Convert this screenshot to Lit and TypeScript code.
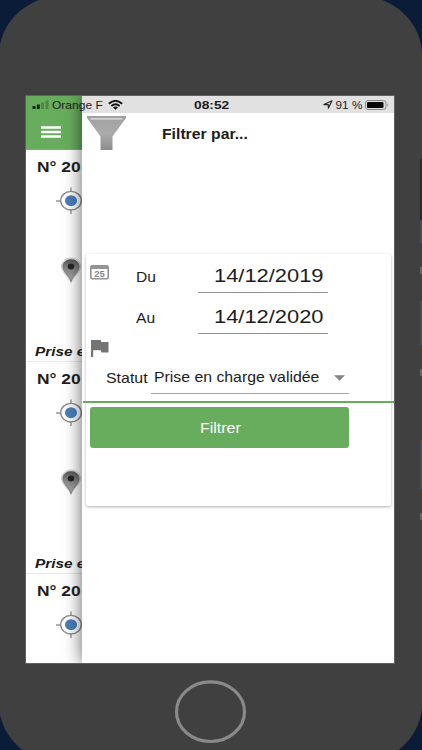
import { LitElement, html, css, svg } from "lit";
import { customElement, property, state, query } from "lit/decorators.js";

/** One line of text stretched horizontally to an exact width. */
@customElement("fit-text")
class FitText extends LitElement {
  @property({ type: Number }) width = 0;
  @property() text = "";
  @state() private ratio = 1;
  @query("span") private line!: HTMLSpanElement;

  static styles = css`
    :host { display: block; flex: none; line-height: 20px; height: 20px; }
    .line { display: inline-block; white-space: nowrap; transform-origin: 0 50%; }
  `;

  firstUpdated() {
    const natural = this.line.offsetWidth;
    if (natural) this.ratio = this.width / natural;
  }

  render() {
    return html`<span class="line" style="transform:scaleX(${this.ratio})">${this.text}</span>`;
  }
}

@customElement("trip-card")
class TripCard extends LitElement {
  static styles = css`
    :host { display: block; height: 212px; box-sizing: border-box; border-bottom: 1px solid #e9e9e9; overflow: hidden; }
    .number { font-size: 15px; font-weight: bold; margin: 7px 0 0 10.5px; }
    .icon { display: block; margin-left: 29px; }
    .target { margin-top: 9px; }
    .pin { margin-top: 40px; }
    .status { font-size: 13.5px; font-weight: bold; font-style: italic; margin: 58px 0 0 8.5px; }
  `;

  render() {
    return html`
      <fit-text class="number" width="44" text="N° 20"></fit-text>
      <svg class="icon target" width="32" height="30" viewBox="0 0 32 30" fill="none">
        <path d="M16 1.5v5M16 23v5M1 15h5M26 15h5" stroke="#969696" stroke-width="1.4" />
        <ellipse cx="16" cy="14.7" rx="10.3" ry="9.3" fill="#fff" stroke="#8e8e8e" stroke-width="1.4" />
        <ellipse cx="16" cy="14.7" rx="6" ry="5.5" fill="#4a7fba" />
      </svg>
      <svg class="icon pin" width="32" height="28" viewBox="0 0 32 28">
        <defs>
          <linearGradient id="g" x1="0" y1="0" x2="0" y2="1">
            <stop offset="0" stop-color="#555" /><stop offset=".45" stop-color="#8a8a8a" /><stop offset="1" stop-color="#a8a8a8" />
          </linearGradient>
        </defs>
        <path d="M16 26.500C14 21 6.500 16.500 6.500 10.300C6.500 5.500 11 2 16 2S25.500 5.500 25.500 10.300C25.500 16.500 18 21 16 26.500z" fill="#fff" stroke="#b8b8b8" stroke-width=".7" />
        <path d="M16 25.500C14.500 20.500 7.700 16 7.700 10.500C7.700 6.300 11.500 3.300 16 3.300S24.300 6.300 24.300 10.500C24.300 16 17.500 20.500 16 25.500z" fill="url(#g)" stroke="#666" stroke-width=".6" />
        <ellipse cx="16" cy="10.500" rx="3.300" ry="3" fill="#262626" />
      </svg>
      <fit-text class="status" width="50" text="Prise e"></fit-text>
    `;
  }
}

const funnel = svg`
  <defs><linearGradient id="f" x1="0" y1="0" x2="0" y2="1">
    <stop offset="0" stop-color="#a0a0a0"/><stop offset=".5" stop-color="#ababab"/><stop offset="1" stop-color="#8e8e8e"/>
  </linearGradient></defs>
  <path d="M0 0h39v2L25.500 20.500V34h-12V20.500L0 2z" fill="url(#f)"/>
  <path d="M3.500 2.800h32" stroke="#e4e4e4" stroke-width="1.300"/>`;

@customElement("app-root")
class AppRoot extends LitElement {
  static styles = css`
    :host { display: block; position: relative; width: 422px; height: 750px; overflow: hidden; background: #0a1c38; color: #1c1c1c;
      font-family: "Liberation Sans", Arial, sans-serif; }
    .phone { position: absolute; left: -1px; top: -5px; width: 423px; height: 769px; box-sizing: border-box; padding: 101px 0 0 27px;
      border-radius: 66px / 60px; background: #404040; }
    .screen { position: relative; display: flex; width: 368px; height: 567px; overflow: hidden; background: #fff; box-shadow: 0 0 0 1px #606060; }
    .list { width: 56px; overflow: hidden; flex: none; }
    .bar { height: 54px; background: #68ad5e; box-sizing: border-box; padding: 29.500px 0 0 15px; border-bottom: 1px solid #79b570; }
    .menu { display: block; }
    .drawer { flex: 1; background: #fff; box-shadow: 0 0 17px rgba(0, 0, 0, .62); }
    .strip { height: 17px; background: #e1e1e1; }
    .head { display: flex; height: 141px; align-items: flex-start; }
    .funnel { margin: 3px 0 0 5px; }
    .title { font-size: 14.200px; font-weight: bold; margin: 11px 0 0 35.500px; }
    .card { width: 305px; height: 252px; margin-left: 4px; border-radius: 2px; background: #fff; box-shadow: 0 1px 3px rgba(0, 0, 0, .32); }
    .row { display: flex; align-items: flex-end; }
    .first { height: 39px; }
    .second { height: 41px; }
    .ico { flex: none; align-self: flex-start; margin-left: 4px; }
    .cal { margin-top: 11px; }
    .gap { width: 19px; flex: none; margin-left: 4px; }
    .label { font-size: 14px; width: 62px; margin: 0 0 6px 27px; }
    .label.stat { width: 45px; margin: 0 0 6px 20px; font-size: 14.200px; }
    .field { box-sizing: border-box; width: 130px; height: 33px; padding: 6px 0 0 15.500px; border-bottom: 1px solid #929292; font-size: 18.800px; }
    .flagline { height: 27px; }
    .flag { display: block; margin-left: 5px; padding-top: 6px; }
    .select { display: flex; box-sizing: border-box; width: 198px; height: 33px; padding: 6px 4px 0 2.500px; border-bottom: 1px solid #a6a6a6; font-size: 14.200px; justify-content: space-between; }
    .caret { margin-top: 8px; }
    .rule { width: 311px; height: 2px; margin: 7px 0 0 -3px; background: #67ac5c; }
    .btn { display: flex; justify-content: center; align-items: center; width: 259px; height: 41px; margin: 4px 0 0 4px; padding: 0 3px 0 0; border: 0;
      border-radius: 3px; background: #68ad5d; color: #fff; font: 14px "Liberation Sans", Arial, sans-serif; }
    .caption { width: 41px; }
    .status { position: absolute; inset: 0 0 auto 0; height: 17px; display: flex; align-items: center; font-size: 11.800px; }
    .signal { margin-left: 5.500px; }
    .carrier { margin-left: 3.500px; width: 51px; }
    .wifi { margin-left: 5px; }
    .time { margin-left: 70.500px; width: 35px; font-weight: bold; }
    .loc { margin-left: 94px; }
    .pct { margin-left: 3px; width: 27px; }
    .batt { margin-left: 2px; }
    .home { position: absolute; left: 174px; top: 679px; }
    .edge { position: absolute; left: 420px; top: 159px; width: 2px; display: flex; flex-direction: column; opacity: .75; }
    .dark { height: 61px; background: #242424; }
    .blue { height: 23px; background: #40535f; }
    .mid { height: 44px; margin-top: 27px; }
    .low { height: 49px; margin-top: 64px; }
    .tick { height: 7px; margin-top: 24px; background: #747474; }
  `;

  render() {
    return html`
      <div class="phone">
        <div class="screen">
          <div class="list">
            <div class="bar">
              <svg class="menu" width="20" height="12" viewBox="0 0 20 12"><path d="M0 1.500h20M0 6h20M0 10.500h20" stroke="#fff" stroke-width="2.600" /></svg>
            </div>
            <trip-card></trip-card><trip-card></trip-card><trip-card></trip-card>
          </div>
          <div class="drawer">
            <div class="strip"></div>
            <div class="head">
              <svg class="funnel" width="39" height="34" viewBox="0 0 39 34">${funnel}</svg>
              <fit-text class="title" width="85.5" text="Filtrer par..."></fit-text>
            </div>
            <div class="card">
              <div class="row first">
                <svg class="ico cal" width="19" height="15" viewBox="0 0 19 15">
                  <rect x=".8" y=".8" width="17.400" height="13" rx="1.500" fill="#fff" stroke="#929292" stroke-width="1.600" />
                  <path d="M1 1h17v3H1z" fill="#959595" />
                  <text x="4.300" y="11.800" font-family="Liberation Sans" font-size="8.200" font-weight="bold" textLength="10.500" lengthAdjust="spacingAndGlyphs" fill="#858585">25</text>
                </svg>
                <fit-text class="label" width="20" text="Du"></fit-text>
                <div class="field"><fit-text width="109.5" text="14/12/2019"></fit-text></div>
              </div>
              <div class="row second">
                <div class="gap"></div>
                <fit-text class="label" width="19" text="Au"></fit-text>
                <div class="field"><fit-text width="109.5" text="14/12/2020"></fit-text></div>
              </div>
              <div class="flagline">
                <svg class="flag" width="18" height="17" viewBox="0 0 18 17"><path d="M0 0h9.800l.5 2H17.500v10.500h-7l-.6-2.200H2.200V17H0z" fill="#747474" /></svg>
              </div>
              <div class="row">
                <fit-text class="label stat" width="41.5" text="Statut"></fit-text>
                <div class="select">
                  <fit-text width="165" text="Prise en charge validée"></fit-text>
                  <svg class="caret" width="11" height="6" viewBox="0 0 11 6"><path d="M0 .3h11L5.500 5.800z" fill="#858585" /></svg>
                </div>
              </div>
              <div class="rule"></div>
              <button class="btn"><fit-text class="caption" width="41" text="Filtrer"></fit-text></button>
            </div>
          </div>
          <div class="status">
            <svg class="signal" width="17" height="9" viewBox="0 0 17 9"><path d="M.5 6h3v3h-3zM4.800 4.500h3V9h-3z" fill="#182816" /><path d="M9 2.500h3V9H9zM13.500.5h3V9h-3z" fill="#4f8747" /></svg>
            <fit-text class="carrier" width="51" text="Orange F"></fit-text>
            <svg class="wifi" width="15" height="10" viewBox="0 0 15 10" fill="none" stroke="#151515" stroke-width="1.800">
              <path d="M.8 3.700Q7.500-2 14.200 3.700M3.300 6Q7.500 2.500 11.700 6" /><path d="M5 7.500Q7.500 5.600 10 7.500L7.500 9.800z" fill="#151515" stroke="none" />
            </svg>
            <fit-text class="time" width="35" text="08:52"></fit-text>
            <svg class="loc" width="10" height="9" viewBox="0 0 10 9"><path d="M.9 4.600L9 .8 5.300 8.200V4.600z" fill="none" stroke="#222" stroke-width="1.100" stroke-linejoin="round" /></svg>
            <fit-text class="pct" width="27" text="91 %"></fit-text>
            <svg class="batt" width="25" height="10" viewBox="0 0 25 10">
              <rect x=".5" y=".5" width="20.500" height="9" rx="2.500" fill="none" stroke="#888" /><rect x="2" y="2" width="16.500" height="6" rx="1" fill="#080808" /><path d="M22.500 3.500q1.500 1.500 0 3z" fill="#777" />
            </svg>
          </div>
        </div>
      </div>
      <svg class="home" width="73" height="65" viewBox="0 0 73 65"><ellipse cx="36.500" cy="32.700" rx="34" ry="29.800" fill="none" stroke="#8a8a8a" stroke-width="3.200" /></svg>
      <div class="edge">
        <div class="dark"></div><div class="blue"></div><div class="tick"></div><div class="blue mid"></div><div class="tick"></div><div class="blue low"></div><div class="tick"></div>
      </div>
    `;
  }
}
